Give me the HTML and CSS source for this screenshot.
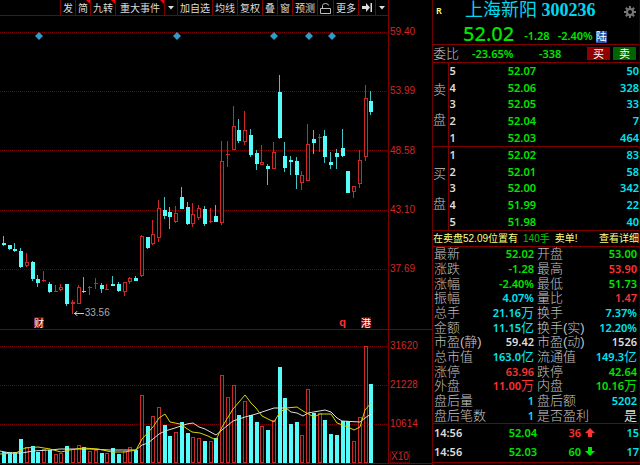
FILE: index.html
```html
<!DOCTYPE html>
<html lang="zh-CN">
<head>
    <meta charset="UTF-8">
    <meta name="viewport" content="width=device-width, initial-scale=1.0">
    <title>上海新阳 300236</title>
    <link rel="stylesheet" href="styles.css">
</head>
<body>
    <div class="terminal">
        <main class="charts">
            <nav class="toolbar">
                <button>发</button>
                <button class="hot">简</button>
                <button class="hot">九转</button>
                <button class="hot wide">重大事件</button>
                <button class="icon" aria-label="更多事件"><svg width="6" height="4"><path d="M0 0h6L3 3.5z"/></svg></button>
                <button>加自选</button>
                <button>均线</button>
                <button>复权</button>
                <button>叠</button>
                <button>窗</button>
                <button>预测</button>
                <button aria-label="锁定"><svg class="lock" width="11" height="12"><path d="M.5 6.5h10v5H.5zM2.5 6.5V3.5Q2.5 1.5 5.5 1.5Q8.5 1.5 8.5 3.5"/></svg></button>
                <button>更多</button>
                <button class="icon" aria-label="跳到最新"><svg width="10" height="9"><path d="M0 3h4V0l4 4.5L4 9V6H0zM8.5 0H10v9H8.5z"/></svg></button>
                <button class="icon" aria-label="展开"><svg width="6" height="4"><path d="M0 0h6L3 3.5z"/></svg></button>
            </nav>
            <section class="plot price-plot">
                <svg id="priceChart" viewBox="0 0 388 313" preserveAspectRatio="none"></svg>
                <span class="low-mark"><svg width="10" height="5"><path d="M0 2.5h10M3.5 0L.5 2.5L3.5 5"/></svg>33.56</span>
                <span class="tag tag-cai">财</span>
                <span class="tag-q">q</span>
                <span class="tag tag-gang">港</span>
            </section>
            <div class="axis price-axis">
                <span>59.40</span>
                <span>53.99</span>
                <span>48.58</span>
                <span>43.10</span>
                <span>37.69</span>
            </div>
            <section class="plot volume-plot">
                <svg id="volumeChart" viewBox="0 330 388 133" preserveAspectRatio="none"></svg>
            </section>
            <div class="axis volume-axis">
                <div class="scale">
                    <span>31620</span>
                    <span>21228</span>
                    <span>10614</span>
                </div>
                <span class="unit">X10</span>
            </div>
        </main>

        <aside class="quote">
            <header>
                <div class="title">
                    <span class="mark">R</span>
                    <h1>上海新阳 <b>300236</b></h1>
                    <button class="gear" aria-label="设置">
                        <svg width="12" height="12" viewBox="0 0 12 12">
                            <g stroke="#777" stroke-width="2"><path d="M6 0v12M0 6h12M1.8 1.8l8.4 8.4M10.2 1.8l-8.4 8.4"/></g>
                            <circle cx="6" cy="6" r="4" fill="#777"/><circle cx="6" cy="6" r="2" fill="#000"/>
                        </svg>
                    </button>
                </div>
                <div class="last green">
                    <strong>52.02</strong>
                    <span>-1.28</span>
                    <span>-2.40%</span>
                    <i>陆</i>
                </div>
            </header>
            <div class="ratio">
                <span class="label">委比</span>
                <span class="green pct">-23.65%</span>
                <span class="green diff">-338</span>
                <button class="buy">买</button>
                <button class="sell">卖</button>
            </div>
            <table class="book">
                <tr><th class="side" rowspan="5">卖<br>盘</th><th>5</th><td class="green">52.07</td><td>50</td></tr>
                <tr><th>4</th><td class="green">52.06</td><td>328</td></tr>
                <tr><th>3</th><td class="green">52.05</td><td>33</td></tr>
                <tr><th>2</th><td class="green">52.04</td><td>7</td></tr>
                <tr><th>1</th><td class="green">52.03</td><td>464</td></tr>
            </table>
            <table class="book">
                <tr><th class="side" rowspan="5">买<br>盘</th><th>1</th><td class="green">52.02</td><td>83</td></tr>
                <tr><th>2</th><td class="green">52.01</td><td>58</td></tr>
                <tr><th>3</th><td class="green">52.00</td><td>342</td></tr>
                <tr><th>4</th><td class="green">51.99</td><td>22</td></tr>
                <tr><th>5</th><td class="green">51.98</td><td>40</td></tr>
            </table>
            <div class="notice">
                <span>在卖盘52.09位置有</span>
                <span class="lots">140手</span>
                <span>卖单!</span>
                <a href="#">查看详细</a>
            </div>
            <table class="stats">
                <tr><th>最新</th><td class="green">52.02</td><th>开盘</th><td class="green">53.00</td></tr>
                <tr><th>涨跌</th><td class="green">-1.28</td><th>最高</th><td class="red">53.90</td></tr>
                <tr><th>涨幅</th><td class="green">-2.40%</td><th>最低</th><td class="green">51.73</td></tr>
                <tr><th>振幅</th><td class="cyan">4.07%</td><th>量比</th><td class="red">1.47</td></tr>
                <tr><th>总手</th><td class="cyan">21.16<em>万</em></td><th>换手</th><td class="cyan">7.37%</td></tr>
                <tr><th>金额</th><td class="cyan">11.15<em>亿</em></td><th>换手(实)</th><td class="cyan">12.20%</td></tr>
                <tr><th>市盈(静)</th><td>59.42</td><th>市盈(动)</th><td>1526</td></tr>
                <tr><th>总市值</th><td class="cyan">163.0<em>亿</em></td><th>流通值</th><td class="cyan">149.3<em>亿</em></td></tr>
                <tr><th>涨停</th><td class="red">63.96</td><th>跌停</th><td class="green">42.64</td></tr>
                <tr><th>外盘</th><td class="red">11.00<em>万</em></td><th>内盘</th><td class="green">10.16<em>万</em></td></tr>
                <tr><th>盘后量</th><td class="cyan">1</td><th>盘后额</th><td class="cyan">5202</td></tr>
                <tr><th>盘后笔数</th><td class="cyan">1</td><th>是否盈利</th><td><em>是</em></td></tr>
            </table>
            <table class="ticks">
                <tr><th>14:56</th><td class="green">52.04</td><td class="red">36</td><td class="arrow red"><svg width="10" height="10"><path d="M5 0l5 5H7v4H3V5H0z"/></svg></td><td class="cyan">15</td></tr>
                <tr><th>14:56</th><td class="green">52.03</td><td class="green">60</td><td class="arrow green"><svg width="10" height="10"><path d="M5 9l5-5H7V0H3v4H0z"/></svg></td><td class="cyan">17</td></tr>
            </table>
        </aside>
    </div>
    <script src="chart.js"></script>
</body>
</html>
```
FILE: styles.css
```css
* {
    margin: 0;
    padding: 0;
    box-sizing: border-box;
}

body {
    background-color: #000;
    color: #ddd;
    font-family: "Noto Sans", "Noto Sans CJK SC", sans-serif;
    font-size: 11px;
}

button {
    background: none;
    border: none;
    color: inherit;
    font-family: inherit;
    cursor: pointer;
}

.green {
    color: #00e600;
}

.red {
    color: #ff3232;
}

.cyan {
    color: #00e6f0;
}

.terminal {
    display: grid;
    grid-template-columns: minmax(0, 1fr) 208px;
    min-height: 100vh;
}

/* Charts */
.charts {
    display: grid;
    grid-template-columns: minmax(0, 1fr) 43px;
    grid-template-rows: 16px minmax(0, 314fr) minmax(0, 134fr);
    padding-bottom: 1px;
}

.toolbar {
    grid-column: 1;
    display: flex;
    justify-content: flex-end;
    border-bottom: 1px solid #800000;
    border-right: 1px solid #800000;
}

.toolbar button {
    position: relative;
    display: flex;
    align-items: center;
    padding: 0 2px;
    border-left: 1px solid #800000;
    font-family: "Noto Sans CJK SC", sans-serif;
    font-size: 10px;
    line-height: 15px;
    white-space: nowrap;
}

.toolbar .icon {
    padding: 0 3px;
}

.toolbar .wide {
    padding: 0 4px;
}

.toolbar svg {
    fill: #ddd;
}

.toolbar .lock {
    fill: none;
    stroke: #bbb;
}

.toolbar .hot::after {
    content: "";
    position: absolute;
    top: 0;
    right: 0;
    border-top: 4px solid #f00;
    border-left: 4px solid transparent;
}

.plot {
    position: relative;
    grid-column: 1;
    border-right: 1px solid #800000;
    border-bottom: 1px solid #800000;
}

.plot > svg {
    position: absolute;
    width: 100%;
    height: 100%;
}

.grid-line {
    stroke: #7a0000;
    stroke-dasharray: 1 1;
}

.up {
    fill: #000;
    stroke: #cc2828;
}

.down {
    fill: #54fcfc;
}

.up-wick {
    fill: #cc2828;
}

.down-wick {
    fill: #40c4c4;
}

.diamond {
    fill: #2c9ccc;
}

.ma {
    fill: none;
}

.ma-fast {
    stroke: #d8d800;
}

.ma-slow {
    stroke: #ddd;
}

.low-mark {
    position: absolute;
    left: 19%;
    top: 93%;
    display: flex;
    align-items: center;
    gap: 1px;
    font-family: "Liberation Sans", sans-serif;
    font-size: 10px;
    line-height: 12px;
    color: #aaa;
}

.low-mark svg {
    fill: none;
    stroke: #ccc;
}

.tag {
    position: absolute;
    bottom: 1px;
    background-color: #800000;
    color: #fff;
    font-family: "Noto Sans CJK SC", sans-serif;
    font-size: 10px;
    line-height: 11px;
}

.tag-cai {
    left: 34px;
}

.tag-gang {
    right: 17px;
}

.tag-q {
    position: absolute;
    right: 42px;
    bottom: 0;
    color: #ff3232;
    font-family: "Liberation Sans", sans-serif;
    font-weight: bold;
    line-height: 14px;
}

.axis {
    display: flex;
    flex-direction: column;
    justify-content: space-between;
    padding-left: 1px;
    border-bottom: 1px solid #800000;
    color: #d02828;
    font-family: "Liberation Sans", sans-serif;
    font-size: 10px;
    line-height: 12px;
}

.price-axis {
    padding-top: 10px;
    padding-bottom: 54px;
}

.scale {
    display: flex;
    flex: 1;
    flex-direction: column;
    justify-content: space-between;
    padding: 10px 0 21px;
}

.unit {
    align-self: flex-start;
    border: 1px solid #600000;
    line-height: 10px;
}

/* Quote panel */
.quote {
    display: grid;
    grid-template-rows: 45px 18px 84px 84px 16px minmax(176px, 1fr) 39px;
    padding-bottom: 2px;
    border-left: 1px solid #700000;
    border-right: 1px solid #300000;
    font-weight: 600;
}

.quote > * {
    width: 100%;
    border-bottom: 1px solid #800000;
}

.title {
    display: flex;
    align-items: center;
    height: 20px;
    padding: 0 3px;
}

.mark {
    width: 29px;
    color: #ffff80;
    font-size: 9px;
}

h1 {
    color: #00d8f0;
    font-family: "Liberation Serif", "Noto Sans CJK SC", serif;
    font-size: 18px;
    font-weight: 400;
    line-height: 20px;
}

.gear {
    height: 12px;
    margin-left: auto;
}

.last {
    display: flex;
    align-items: flex-end;
    height: 24px;
    padding: 0 0 1px 30px;
    gap: 8px;
    line-height: 14px;
}

.last strong {
    margin-right: 2px;
    font-size: 20px;
    font-weight: 500;
    line-height: 18px;
}

.last i {
    margin-left: -5px;
    background-color: #2850a0;
    color: #fff;
    font-size: 11px;
    font-style: normal;
    font-weight: 400;
    line-height: 12px;
}

.ratio {
    display: flex;
    align-items: center;
    padding-right: 3px;
    line-height: 16px;
}

.label,
.side,
.stats th {
    color: #c4c4c4;
    font-family: "Liberation Sans", "Noto Sans CJK SC", sans-serif;
    font-size: 13px;
    font-weight: 300;
}

.pct {
    margin-left: 13px;
}

.diff {
    margin: 0 auto;
}

.ratio button {
    width: 23px;
    height: 13px;
    color: #fff;
    font-size: 11px;
    line-height: 13px;
}

.buy {
    background-color: #900000;
}

.ratio .sell {
    margin-left: 3px;
    background-color: #006400;
}

table {
    border-collapse: collapse;
    table-layout: fixed;
    line-height: 14px;
}

th {
    font-weight: inherit;
    text-align: left;
    white-space: nowrap;
}

td {
    text-align: right;
}

.book th {
    width: 24px;
    padding-left: 1px;
}

.book .side {
    width: 15px;
    padding: 0;
    border-right: 1px solid #800000;
    line-height: 30px;
}

.book td:nth-last-child(2) {
    width: 64px;
}

.book td:last-child {
    color: #00e6f0;
}

.notice {
    display: flex;
    align-items: center;
    gap: 5px;
    color: #ffff80;
    font-family: "Liberation Sans", "Noto Sans CJK SC", sans-serif;
    font-size: 10px;
    font-weight: 400;
    line-height: 15px;
    white-space: nowrap;
}

.notice .lots {
    color: #00c800;
}

.notice a {
    margin-left: auto;
    color: inherit;
    text-decoration: none;
}

.stats th {
    width: 52px;
    padding-left: 1px;
}

.stats td {
    padding-right: 2px;
}

.stats em {
    font-family: "Liberation Sans", "Noto Sans CJK SC", sans-serif;
    font-size: 13px;
    font-style: normal;
    font-weight: 400;
}

.ticks th {
    width: 40px;
    padding-left: 1px;
}

.ticks td:nth-child(2) {
    width: 64px;
}

.ticks .arrow {
    width: 14px;
}

.ticks svg {
    display: block;
    margin-left: auto;
    fill: currentColor;
}
```
FILE: chart.js
```js
// high, body top, body bottom, low, volume top, rising (1) or falling (0)
const candles = [
    [236, 243, 245, 246, 452, 0], [245, 245, 249, 250, 452, 0], [243, 249, 251, 252, 452, 0],
    [248, 251, 267, 268, 439, 0], [253, 262, 266, 267, 447, 1], [261, 262, 279, 281, 446, 0],
    [275, 279, 283, 287, 452, 0], [271, 280, 281, 282, 449, 1], [282, 284, 292, 293, 450, 0],
    [285, 291, 292, 292, 454, 1], [284, 287, 290, 291, 453, 1], [284, 284, 304, 306, 446, 0],
    [300, 302, 304, 314, 449, 1], [285, 287, 304, 304, 445, 1], [277, 291, 292, 293, 447, 0],
    [286, 287, 288, 295, 451, 1], [278, 283, 284, 289, 450, 1], [283, 285, 289, 293, 453, 0],
    [284, 289, 290, 290, 453, 1], [276, 284, 286, 286, 448, 0], [282, 284, 291, 292, 454, 0],
    [282, 282, 292, 296, 451, 1], [277, 278, 282, 284, 447, 1], [276, 278, 281, 281, 450, 0],
    [235, 236, 276, 277, 395, 1], [237, 237, 248, 249, 426, 0], [220, 234, 244, 245, 416, 1],
    [200, 208, 238, 242, 407, 1], [197, 210, 216, 219, 425, 0], [207, 212, 217, 229, 436, 0],
    [206, 213, 222, 223, 432, 1], [187, 197, 209, 209, 422, 0], [202, 207, 224, 225, 433, 0],
    [203, 214, 224, 227, 437, 1], [205, 208, 218, 220, 438, 1], [206, 209, 224, 226, 441, 0],
    [208, 221, 222, 223, 441, 1], [205, 216, 222, 222, 438, 0], [141, 161, 223, 225, 375, 1],
    [141, 154, 155, 167, 397, 1], [106, 126, 150, 150, 385, 1], [119, 130, 141, 143, 415, 0],
    [111, 130, 142, 145, 401, 1], [129, 135, 155, 157, 415, 0], [150, 153, 164, 170, 422, 0],
    [145, 162, 165, 165, 426, 1], [164, 166, 169, 185, 430, 0], [142, 152, 169, 169, 420, 1],
    [75, 92, 138, 139, 367, 0], [142, 156, 168, 172, 398, 0], [156, 160, 162, 175, 424, 0],
    [157, 161, 175, 189, 422, 0], [171, 175, 183, 190, 435, 1], [124, 144, 181, 181, 389, 1],
    [130, 139, 143, 154, 413, 0], [134, 137, 138, 152, 413, 1], [130, 136, 157, 163, 420, 0],
    [152, 162, 165, 169, 434, 0], [149, 153, 157, 169, 435, 0], [129, 148, 156, 157, 421, 0],
    [171, 171, 193, 193, 421, 0], [186, 186, 192, 198, 441, 1], [150, 160, 184, 188, 417, 1],
    [85, 98, 157, 161, 346, 1], [91, 101, 112, 115, 384, 0]
];

const fast = "0,454 16,453 25,448 38,447 50,449 61,452 70,450 83,448 98,449 112,452 125,452 136,450 142,439 153,427 159,418 165,414 170,422 180,424 192,432 200,433 208,436 216,440 222,427 233,409 245,395 251,403 256,408 262,416 274,422 280,412 286,408 297,407 303,411 314,417 320,414 331,414 337,423 348,427 354,430 360,427 365,410 371,403";
const slow = "0,451 10,453 22,453 33,451 50,450 60,449 90,449 110,450 136,450 142,445 148,443 153,439 159,434 165,431 175,428 181,426 187,424 193,423 199,427 205,429 216,435 222,430 233,421 245,417 256,414 268,410 274,408 286,408 291,412 297,413 303,416 308,413 325,410 331,412 337,418 342,421 360,422 365,418 371,414";

function rect(cls, x, y, w, h) {
    return `<rect class="${cls}" x="${x}" y="${y}" width="${w}" height="${h}"/>`;
}

function gridLine(y) {
    return `<path class="grid-line" d="M0 ${y + 0.5}H388"/>`;
}

// Hollow red box for rising days, solid cyan for falling ones
function bar(x, top, bottom, rising) {
    const h = Math.max(bottom - top, 1);
    if (!rising) return rect("down", x - 2, top, 4, h);
    if (h < 2) return rect("up-wick", x - 2, top, 4, 1);
    return rect("up", x - 1.5, top + 0.5, 3, h - 1);
}

let price = [32, 91, 150, 210, 269].map(gridLine).join("");
let volume = [346, 385, 424].map(gridLine).join("");

candles.forEach(([high, top, bottom, low, vol, rising], i) => {
    const x = Math.round(4 + i * 5.74);
    price += rect(rising ? "up-wick" : "down-wick", x - 1, high, 1, low - high);
    price += bar(x, top, bottom, rising);
    volume += bar(x, vol, 463, rising);
});

[39, 177, 274, 309, 332].forEach(x => {
    price += `<path class="diamond" d="M${x} 32l4 4l-4 4l-4-4z"/>`;
});

volume += `<polyline class="ma ma-slow" points="${slow}"/>`;
volume += `<polyline class="ma ma-fast" points="${fast}"/>`;

document.getElementById("priceChart").innerHTML = `<g transform="translate(0 -16)">${price}</g>`;
document.getElementById("volumeChart").innerHTML = volume;
```
